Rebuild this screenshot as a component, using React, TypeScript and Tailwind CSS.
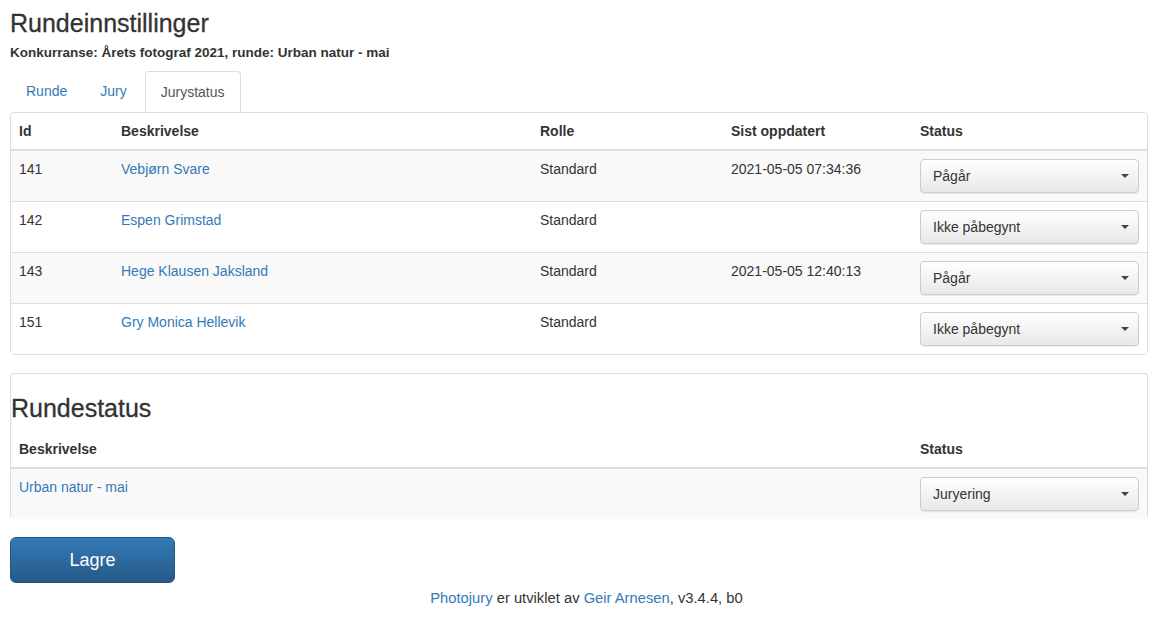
type JuryRow = {
  id: number;
  name: string;
  role: string;
  updated: string;
  status: string;
};

const juryRows: JuryRow[] = [
  { id: 141, name: "Vebjørn Svare", role: "Standard", updated: "2021-05-05 07:34:36", status: "Pågår" },
  { id: 142, name: "Espen Grimstad", role: "Standard", updated: "", status: "Ikke påbegynt" },
  { id: 143, name: "Hege Klausen Jaksland", role: "Standard", updated: "2021-05-05 12:40:13", status: "Pågår" },
  { id: 151, name: "Gry Monica Hellevik", role: "Standard", updated: "", status: "Ikke påbegynt" },
];

const juryCols = "grid grid-cols-[102px_419px_191px_189px_1fr]";

function StatusSelect({ value }: { value: string }) {
  return (
    <div className="flex h-[34px] w-[219px] items-center justify-between rounded-[4px] border border-[#ccc] bg-gradient-to-b from-[#ffffff] to-[#e8e8e8] pl-3 pr-[9px] text-[14px] text-[#333] shadow-[0_1px_1px_rgba(0,0,0,0.075)]">
      <span>{value}</span>
      <svg width="8" height="4" viewBox="0 0 8 4">
        <path d="M0 0h8L4 4z" fill="#444" />
      </svg>
    </div>
  );
}

export default function App() {
  return (
    <div
      className="min-h-screen bg-white px-[10px] text-[14px] leading-5 text-[#333]"
      style={{ fontFamily: '"Liberation Sans", Arial, sans-serif' }}
    >
      <h1 className="pt-[9px] text-[25px] leading-[28px] font-medium [-webkit-text-stroke:0.3px_#333]">
        Rundeinnstillinger
      </h1>
      <p className="mt-[7px] text-[13.5px] leading-[18px] font-bold">
        Konkurranse: Årets fotograf 2021, runde: Urban natur - mai
      </p>

      {/* Tabs */}
      <div className="mt-[9px] flex pl-px">
        <a className="mr-[3px] px-[15px] py-[10px] text-[#337ab7]">Runde</a>
        <a className="mr-[3px] px-[15px] py-[10px] text-[#337ab7]">Jury</a>
        <a className="rounded-t-[4px] border border-b-0 border-[#ddd] bg-white px-[15px] py-[10px] text-[#555]">
          Jurystatus
        </a>
      </div>

      {/* Jury table */}
      <div className="w-[1138px] rounded-[4px] border border-[#ddd]">
        <div className={`${juryCols} border-b-2 border-[#ddd] font-bold`}>
          <div className="p-2">Id</div>
          <div className="p-2">Beskrivelse</div>
          <div className="p-2">Rolle</div>
          <div className="p-2">Sist oppdatert</div>
          <div className="p-2">Status</div>
        </div>
        {juryRows.map((r, i) => (
          <div
            key={r.id}
            className={`${juryCols} ${i > 0 ? "border-t border-[#ddd]" : ""} ${i % 2 === 0 ? "bg-[#f9f9f9]" : "bg-white"}`}
          >
            <div className="p-2">{r.id}</div>
            <div className="p-2 text-[#337ab7]">{r.name}</div>
            <div className="p-2">{r.role}</div>
            <div className="p-2">{r.updated}</div>
            <div className="p-2">
              <StatusSelect value={r.status} />
            </div>
          </div>
        ))}
      </div>

      {/* Round status */}
      <div className="mt-[18px] w-[1138px] rounded-[4px] border border-b-0 border-[#ddd]">
        <h3 className="mt-[21px] mb-[10px] text-[25px] leading-[26px] font-medium [-webkit-text-stroke:0.3px_#333]">
          Rundestatus
        </h3>
        <div className="grid grid-cols-[901px_1fr] border-b-2 border-[#ddd] font-bold">
          <div className="p-2">Beskrivelse</div>
          <div className="p-2">Status</div>
        </div>
        <div className="grid grid-cols-[901px_1fr] bg-[#f9f9f9]">
          <div className="p-2 text-[#337ab7]">Urban natur - mai</div>
          <div className="p-2">
            <StatusSelect value="Juryering" />
          </div>
        </div>
      </div>

      <button className="mt-[18px] h-[46px] w-[165px] rounded-[6px] border border-[#245580] bg-gradient-to-b from-[#337ab7] to-[#265a88] text-[18px] text-white">
        Lagre
      </button>

      <p className="mt-[6px] pl-[10px] text-center text-[14.75px] leading-[18px]">
        <span className="text-[#337ab7]">Photojury</span> er utviklet av{" "}
        <span className="text-[#337ab7]">Geir Arnesen</span>, v3.4.4, b0
      </p>
    </div>
  );
}
